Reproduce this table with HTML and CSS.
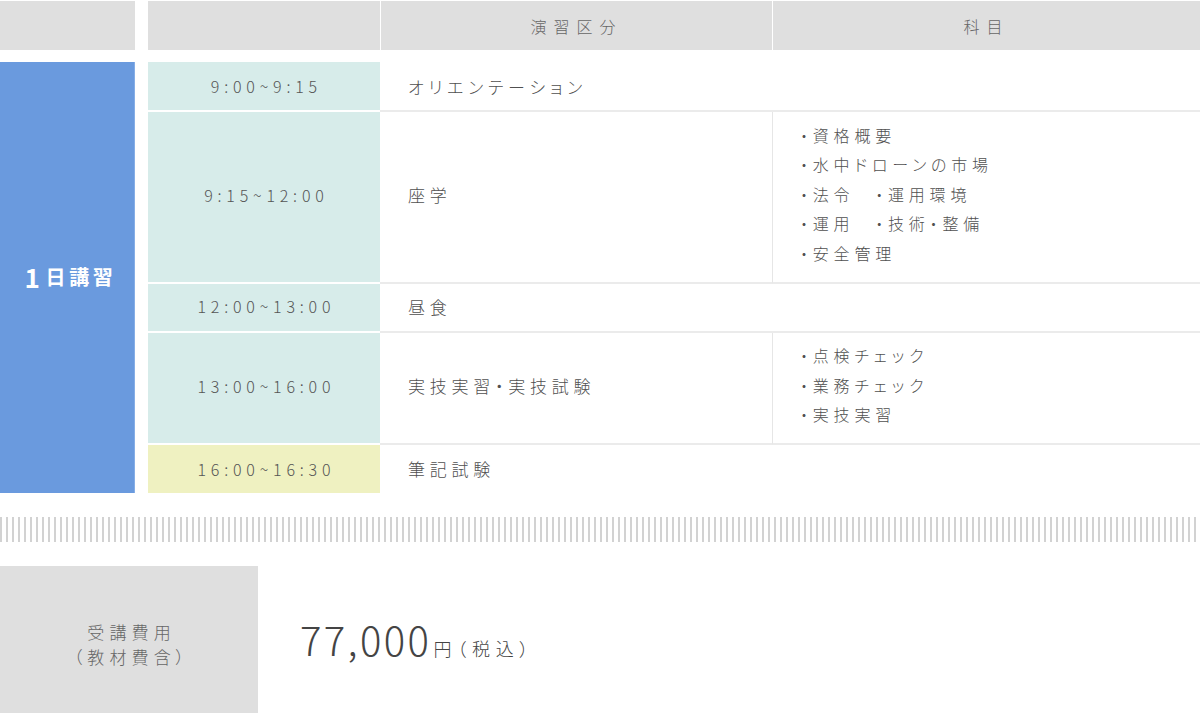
FILE: index.html
```html
<!DOCTYPE html>
<html lang="ja">
<head>
<meta charset="utf-8">
<title>受講スケジュール</title>
<link rel="stylesheet" href="styles.css">
</head>
<body>
<div class="page">
  <div class="schedule">
    <div class="corner"></div>
    <div class="head">
      <div class="hcell"></div>
      <div class="hcell">演習区分</div>
      <div class="hcell">科目</div>
    </div>
    <div class="course"><span class="num">1</span>日講習</div>
    <div class="rows">
      <div class="row r-single">
        <div class="time">9:00~9:15</div>
        <div class="kind span">オリエンテーション</div>
      </div>
      <div class="row r-lecture">
        <div class="time">9:15~12:00</div>
        <div class="kind">座学</div>
        <div class="subject">
          <ul class="list">
            <li>・資格概要</li>
            <li>・水中ドローンの市場</li>
            <li>・法令　・運用環境</li>
            <li>・運用　・技術・整備</li>
            <li>・安全管理</li>
          </ul>
        </div>
      </div>
      <div class="row r-lunch">
        <div class="time">12:00~13:00</div>
        <div class="kind span">昼食</div>
      </div>
      <div class="row r-practice">
        <div class="time">13:00~16:00</div>
        <div class="kind">実技実習・実技試験</div>
        <div class="subject">
          <ul class="list">
            <li>・点検チェック</li>
            <li>・業務チェック</li>
            <li>・実技実習</li>
          </ul>
        </div>
      </div>
      <div class="row r-last">
        <div class="time exam">16:00~16:30</div>
        <div class="kind span">筆記試験</div>
      </div>
    </div>
  </div>

  <div class="divider"></div>

  <div class="fee">
    <div class="fee-label">
      <p>受講費用</p>
      <p>（教材費含）</p>
    </div>
    <div class="fee-price"><span class="amount">77,000</span><span class="unit">円（税込）</span></div>
  </div>
</div>
</body>
</html>
```

FILE: styles.css
```css
* { box-sizing: border-box; }

html, body {
  margin: 0;
  padding: 0;
  background: #fff;
}

body {
  font-family: "Noto Sans CJK JP", "Noto Sans", sans-serif;
  font-weight: 300;
  color: #505050;
  font-size: 16px;
  overflow: hidden;
  font-feature-settings: "palt";
}

.page {
  width: 1200px;
}

.schedule {
  display: grid;
  grid-template-columns: 135px 1fr;
  column-gap: 13px;
  row-gap: 12px;
  padding-top: 1px;
}

.corner {
  background: #dfdfdf;
  height: 49px;
}

.head {
  display: grid;
  grid-template-columns: 232px 391px 1fr;
  column-gap: 1px;
  height: 49px;
}

.hcell {
  background: #dfdfdf;
  display: flex;
  align-items: center;
  justify-content: center;
  color: #666;
  letter-spacing: 0.44em;
  font-size: 16px;
}

.course {
  background: #6a9ade;
  border-right: 1px solid #86aee6;
  color: #fff;
  font-weight: bold;
  font-size: 20px;
  letter-spacing: 0.18em;
  display: flex;
  align-items: center;
  justify-content: center;
  padding-bottom: 2px;
  padding-left: 7px;
}

.course .num {
  font-size: 26px;
  margin-right: 2px;
}

.rows {
  display: flex;
  flex-direction: column;
}

.row {
  display: grid;
  grid-template-columns: 232px 392px 1fr;
}

.r-single { height: 50px; }
.r-lecture { height: 172px; }
.r-lunch { height: 49px; }
.r-practice { height: 112px; }
.r-last { height: 48px; }

.row > div {
  display: flex;
  align-items: center;
  border-bottom: 2px solid #ebebeb;
}

.r-lecture > div,
.r-practice > div {
  padding-bottom: 5px;
}

.r-lunch > div {
  padding-bottom: 3px;
}

.r-last > div {
  padding-bottom: 1px;
  border-bottom: none;
}

.row .time {
  background: #d7ecea;
  border-bottom-color: #fff;
  justify-content: center;
  letter-spacing: 0.3em;
  padding-left: 0.3em;
  color: #555;
  font-size: 16px;
}

.row .time.exam {
  background: #eff1c1;
}

.kind {
  padding-left: 28px;
  font-size: 17px;
  letter-spacing: 0.28em;
}

.kind.span {
  grid-column: 2 / 4;
}

.subject {
  border-left: 1px solid #e6e6e6;
  padding-left: 27px;
}

.list {
  list-style: none;
  margin: 0;
  padding: 0;
  font-size: 16px;
  line-height: 29.5px;
  letter-spacing: 0.3em;
}

.divider {
  margin: 24px 0;
  height: 25px;
  background: repeating-linear-gradient(90deg, #d2d2d2 0 2px, transparent 2px 6px);
}

.fee {
  display: flex;
  align-items: center;
  column-gap: 42px;
}

.fee-label {
  width: 258px;
  height: 155px;
  background: #dfdfdf;
  display: flex;
  flex-direction: column;
  align-items: center;
  justify-content: center;
  color: #666;
  font-size: 17px;
  line-height: 25px;
  letter-spacing: 0.3em;
}

.fee-label p {
  margin: 0;
  padding-left: 0.3em;
}

.fee-price {
  display: flex;
  align-items: baseline;
  color: #444;
  margin-top: -9px;
}

.amount {
  font-size: 40px;
  font-weight: 300;
  letter-spacing: 0.06em;
}

.unit {
  font-size: 18px;
  letter-spacing: 0.32em;
  margin-left: 2px;
}
```
